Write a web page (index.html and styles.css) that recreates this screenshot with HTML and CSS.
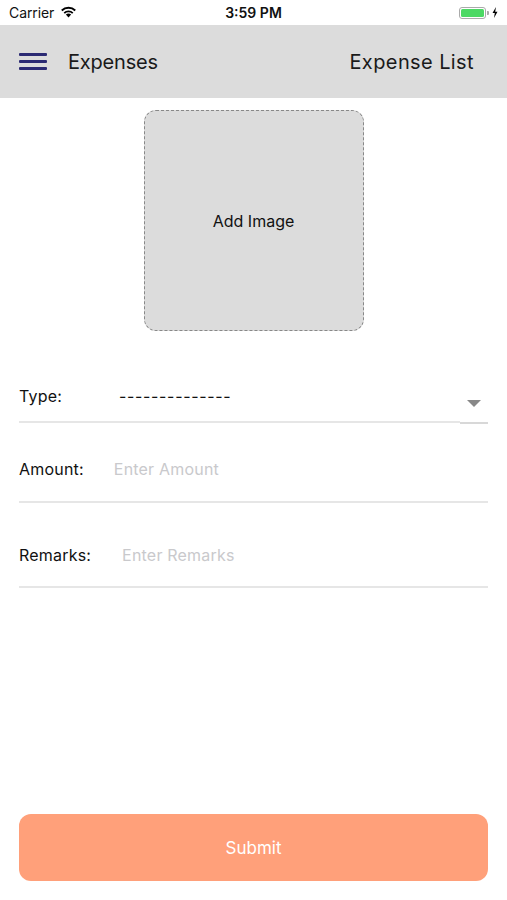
FILE: index.html
```html
<!DOCTYPE html>
<html>
<head>
<meta charset="utf-8">
<link rel="stylesheet" href="styles.css">
</head>
<body>
<div class="screen">
  <div class="status">
    <div class="status-left">
      <span class="carrier">Carrier</span>
      <svg class="wifi" width="17" height="12" viewBox="0 0 17 12">
        <path d="M8.5 11.5 L5.9 8.6 A3.8 3.8 0 0 1 11.1 8.6 Z" fill="#000"/>
        <path d="M3.6 6.4 A7 7 0 0 1 13.4 6.4 L12.1 7.8 A5.1 5.1 0 0 0 4.9 7.8 Z" fill="#000"/>
        <path d="M1.1 3.8 A10.6 10.6 0 0 1 15.9 3.8 L14.6 5.2 A8.7 8.7 0 0 0 2.4 5.2 Z" fill="#000"/>
      </svg>
    </div>
    <div class="time">3:59 PM</div>
    <div class="status-right">
      <div class="battery"><div class="battery-fill"></div></div>
      <div class="battery-cap"></div>
      <svg class="bolt" width="6" height="11" viewBox="0 0 6 11">
        <path d="M4 0 L0.5 6 L2.8 6 L2 11 L5.5 4.8 L3.2 4.8 Z" fill="#000"/>
      </svg>
    </div>
  </div>
  <header class="nav">
    <div class="nav-left">
      <div class="burger"><span></span><span></span><span></span></div>
      <span class="title">Expenses</span>
    </div>
    <span class="nav-link">Expense List</span>
  </header>
  <main class="content">
    <div class="image-box">Add Image</div>
    <div class="field type-field">
      <span class="label">Type:</span>
      <span class="value">--------------</span>
      <span class="arrow"></span>
      <div class="type-lines"><div class="line-a"></div><div class="line-b"></div></div>
    </div>
    <div class="field amount-field">
      <span class="label">Amount:</span>
      <span class="placeholder">Enter Amount</span>
    </div>
    <div class="field remarks-field">
      <span class="label">Remarks:</span>
      <span class="placeholder">Enter Remarks</span>
    </div>
    <div class="spacer"></div>
    <button class="submit">Submit</button>
  </main>
</div>
</body>
</html>
```
FILE: styles.css
```css
* { box-sizing: border-box; }
html, body { margin: 0; padding: 0; background: #fff; }
body { font-family: Inter, "Liberation Sans", sans-serif; color: #111; }
.screen { width: 507px; height: 900px; display: flex; flex-direction: column; }
.status { height: 25px; display: flex; align-items: center; justify-content: space-between; padding: 0 9px 0 9px; position: relative; }
.status-left { display: flex; align-items: center; gap: 6px; }
.carrier { font-size: 14px; letter-spacing: -0.1px; }
.wifi { margin-top: -2px; }
.time { position: absolute; left: 0; right: 0; text-align: center; font-size: 14px; font-weight: 600; pointer-events: none; }
.status-right { display: flex; align-items: center; }
.battery { width: 27px; height: 12px; border: 1px solid #aaa; border-radius: 3px; padding: 1px; }
.battery-fill { width: 100%; height: 100%; background: #4cd964; border-radius: 1.5px; }
.battery-cap { width: 2px; height: 4px; background: #aaa; border-radius: 0 1px 1px 0; margin-left: 1px; }
.bolt { margin-left: 3px; }
.nav { height: 73px; background: #dcdcdc; display: flex; align-items: center; justify-content: space-between; padding: 0 33px 0 19px; }
.nav-left { display: flex; align-items: center; gap: 21px; }
.burger { width: 28px; display: flex; flex-direction: column; gap: 4px; }
.burger span { display: block; height: 3px; background: #2b2a73; border-radius: 1px; }
.title, .nav-link { font-size: 20px; color: #1a1a1a; letter-spacing: -0.2px; }
.nav-link { letter-spacing: 0.4px; }
.content { flex: 1; display: flex; flex-direction: column; padding: 12px 19px 19px 19px; }
.image-box { align-self: center; width: 220px; height: 221px; background: #dcdcdc; border: 1.5px dashed #888; border-radius: 12px; display: flex; align-items: center; justify-content: center; font-size: 16px; color: #111; }
.field { position: relative; display: flex; align-items: center; border-bottom: 2px solid #e6e6e6; font-size: 16px; }
.label { color: #111; letter-spacing: 0.2px; }
.type-field { margin-top: 52px; height: 41px; border-bottom: none; padding-bottom: 16px; }
.type-field .value { margin-left: 57px; font-size: 16px; letter-spacing: 0.65px; }
.arrow { position: absolute; right: 7px; top: 17px; width: 0; height: 0; border-left: 7px solid transparent; border-right: 7px solid transparent; border-top: 7px solid #888; }
.type-lines { position: absolute; left: 0; right: 0; bottom: 0; display: flex; align-items: flex-start; }
.line-a { flex: 1; height: 2px; background: #e6e6e6; }
.line-b { width: 28px; height: 2px; background: #d8d8d8; margin-top: 1px; }
.amount-field { height: 79px; padding-top: 13px; }
.amount-field .placeholder { margin-left: 30px; }
.remarks-field { height: 85px; padding-top: 20px; }
.remarks-field .placeholder { margin-left: 31px; }
.placeholder { color: #c9c9cc; letter-spacing: 0.2px; }
.spacer { flex: 1; }
.submit { height: 67px; width: 100%; border: none; border-radius: 12px; background: #ffa07a; color: #fff; font-family: inherit; font-size: 17px; padding: 0; margin-bottom: 0; }
```
